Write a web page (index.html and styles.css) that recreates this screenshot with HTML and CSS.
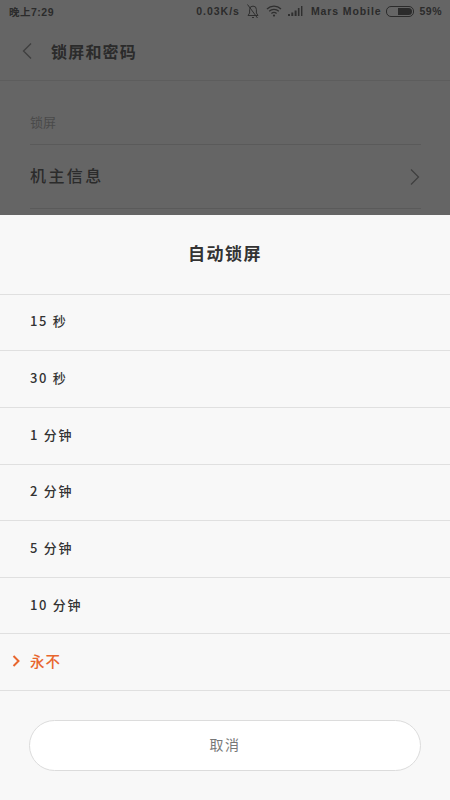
FILE: index.html
```html
<!DOCTYPE html>
<html lang="zh-CN">
<head>
    <meta charset="UTF-8">
    <meta name="viewport" content="width=device-width, initial-scale=1.0">
    <title>自动锁屏</title>
    <link rel="stylesheet" href="styles.css">
</head>
<body>
    <!-- Dimmed settings page -->
    <div class="behind">
        <div class="status-bar">
            <span class="status-time">晚上7:29</span>
            <div class="status-right">
                <span class="speed">0.03K/s</span>
                <svg class="icon-bell" viewBox="0 0 16 16" width="16" height="16">
                    <path d="M3 12.5h10l-1.6-2.5V6.5a3.4 3.4 0 0 0-6.8 0V10z M7 14.5h2 M2.5 1.5l10 13.5" fill="none" stroke="#2f2f2f" stroke-width="1"/>
                </svg>
                <svg class="icon-wifi" viewBox="0 0 16 12" width="16" height="12">
                    <path d="M1 4a10 10 0 0 1 14 0 M3.2 6.3a7 7 0 0 1 9.6 0 M5.4 8.5a4 4 0 0 1 5.2 0" fill="none" stroke="#2f2f2f" stroke-width="1.3"/>
                    <circle cx="8" cy="10.6" r="1.1" fill="#2f2f2f"/>
                </svg>
                <svg class="icon-signal" viewBox="0 0 16 12" width="16" height="12">
                    <path d="M1 9h2v2H1z M4.3 7.5h2V11h-2z M7.6 5.5h2V11h-2z M10.9 3h1.6v8h-1.6z M14 1h1.4v10H14z" fill="#2f2f2f"/>
                </svg>
                <span class="carrier">Mars Mobile</span>
                <div class="battery"><div class="battery-fill"></div></div>
                <span>59%</span>
            </div>
        </div>
        <div class="app-bar">
            <svg class="back-icon" viewBox="0 0 12 18" width="12" height="18">
                <path d="M10 1.5L2.5 9l7.5 7.5" fill="none" stroke="#3f3f3f" stroke-width="1.3"/>
            </svg>
            <span class="app-title">锁屏和密码</span>
        </div>
        <div class="settings">
            <div class="settings-label">锁屏</div>
            <div class="settings-row">
                <span>机主信息</span>
                <svg viewBox="0 0 12 18" width="12" height="18">
                    <path d="M2 1.5L9.5 9 2 16.5" fill="none" stroke="#3f3f3f" stroke-width="1.2"/>
                </svg>
            </div>
        </div>
    </div>

    <!-- Bottom sheet -->
    <div class="sheet">
        <div class="sheet-title">自动锁屏</div>
        <div class="option">15 秒</div>
        <div class="option">30 秒</div>
        <div class="option">1 分钟</div>
        <div class="option">2 分钟</div>
        <div class="option">5 分钟</div>
        <div class="option">10 分钟</div>
        <div class="option selected">
            <svg class="check" viewBox="0 0 9 12" width="9" height="12">
                <path d="M1.5 1l5 5-5 5" fill="none" stroke="#e8662e" stroke-width="2"/>
            </svg>
            永不
        </div>
        <div class="sheet-footer">
            <div class="cancel">取消</div>
        </div>
    </div>
</body>
</html>
```

FILE: styles.css
```css
/* General */
body {
    margin: 0;
    width: 450px;
    height: 800px;
    display: flex;
    flex-direction: column;
    overflow: hidden;
    font-family: "Noto Sans CJK SC", "Liberation Sans", sans-serif;
    background-color: #f8f8f8;
}
/* Dimmed page */
.behind {
    height: 215px;
    flex-shrink: 0;
    background-color: #656565;
    color: #2b2b2b;
    overflow: hidden;
}
.status-bar {
    height: 22px;
    display: flex;
    justify-content: space-between;
    align-items: center;
    padding: 0 8px 0 9px;
    font-family: "Liberation Sans", "Noto Sans CJK SC", sans-serif;
    font-size: 10.5px;
    font-weight: bold;
    letter-spacing: 0.5px;
}
.status-right {
    display: flex;
    align-items: center;
    gap: 5px;
}
.speed {
    letter-spacing: 1px;
}
.carrier {
    letter-spacing: 0.9px;
    margin-left: 3px;
}
.battery {
    width: 24px;
    height: 7px;
    border: 1px solid #2b2b2b;
    border-radius: 5px;
    display: flex;
    justify-content: flex-end;
    padding: 1px;
    box-sizing: content-box;
}
.battery-fill {
    width: 14px;
    background-color: #2b2b2b;
    border-radius: 0 4px 4px 0;
}
.app-bar {
    height: 58px;
    display: flex;
    align-items: center;
    gap: 18px;
    padding-left: 21px;
    border-bottom: 1px solid #5d5d5d;
}
.app-title {
    font-size: 16px;
    font-weight: bold;
    letter-spacing: 1.2px;
}
.settings {
    padding: 0 29px 0 30px;
}
.settings-label {
    height: 64px;
    box-sizing: border-box;
    padding-top: 31px;
    font-size: 13px;
    line-height: 20px;
    color: #4a4a4a;
    border-bottom: 1px solid #5a5a5a;
}
.settings-row {
    height: 63px;
    display: flex;
    justify-content: space-between;
    align-items: center;
    font-size: 16px;
    font-weight: 500;
    letter-spacing: 2.4px;
    border-bottom: 1px solid #5a5a5a;
}
.settings-row span {
    padding-bottom: 4px;
}
/* Bottom sheet */
.sheet {
    flex: 1;
    display: flex;
    flex-direction: column;
}
.sheet-title {
    height: 79.6px;
    box-sizing: border-box;
    display: flex;
    align-items: center;
    justify-content: center;
    font-size: 17px;
    font-weight: bold;
    letter-spacing: 1.5px;
    color: #333;
    border-bottom: 1px solid #e0e0e0;
    padding-bottom: 3px;
}
.option {
    height: 56.65px;
    display: flex;
    align-items: center;
    box-sizing: border-box;
    padding: 0 0 2px 30px;
    font-size: 13px;
    font-weight: 500;
    line-height: 18px;
    letter-spacing: 1.7px;
    color: #333;
    border-bottom: 1px solid #e0e0e0;
    position: relative;
}
.selected {
    color: #e8662e;
    font-size: 14.5px;
    letter-spacing: 1px;
}
.check {
    position: absolute;
    left: 12px;
}
.sheet-footer {
    padding: 29px 29px 0;
}
.cancel {
    height: 51px;
    box-sizing: border-box;
    display: flex;
    align-items: center;
    justify-content: center;
    padding-bottom: 3px;
    background-color: white;
    border: 1px solid #dcdcdc;
    border-radius: 26px;
    font-size: 14px;
    letter-spacing: 1.5px;
    color: #777;
}
```
